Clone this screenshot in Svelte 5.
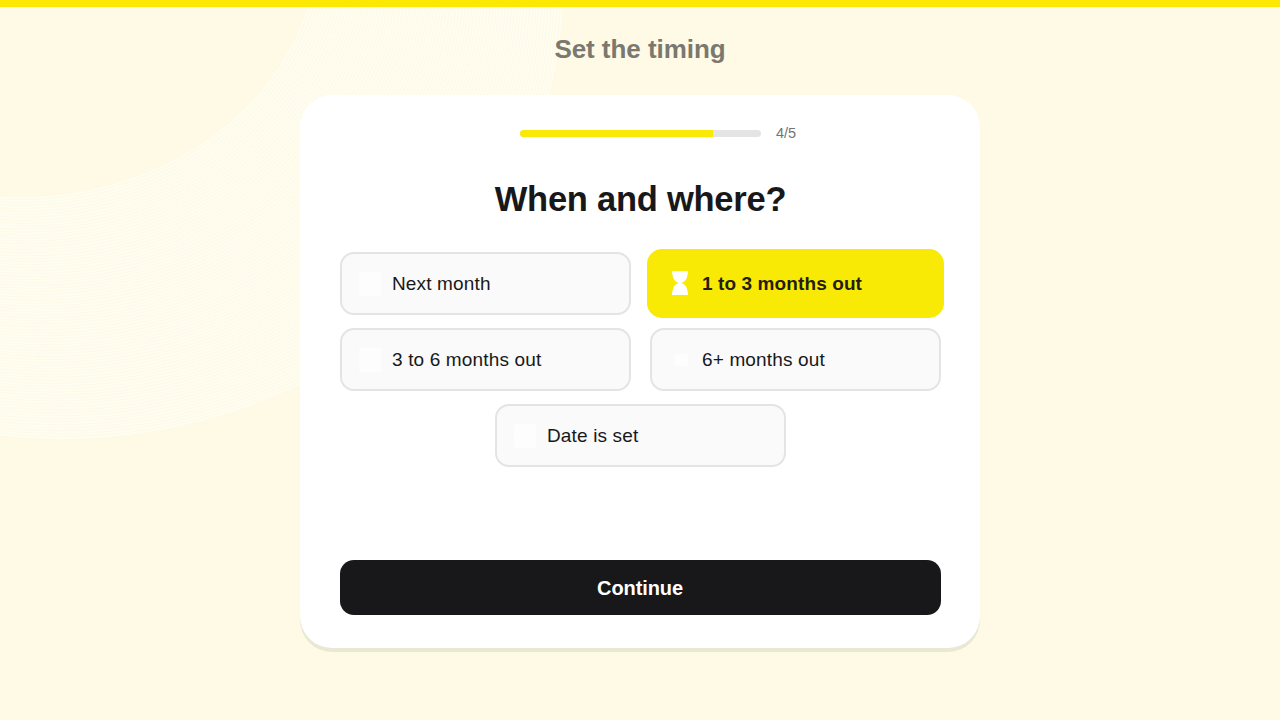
<script>
  const options = [
    { label: 'Next month', icon: 'square' },
    { label: '1 to 3 months out', icon: 'hourglass', selected: true },
    { label: '3 to 6 months out', icon: 'square' },
    { label: '6+ months out', icon: 'small' },
    { label: 'Date is set', icon: 'square' }
  ];
  const rings = Array.from({ length: 82 }, (_, i) => {
    const t = i / 81;
    return { cx: 20 + 40 * t, cy: -60 + 50 * t, rx: 299 + 203 * t, ry: 258 + 190 * t };
  });
</script>

<main>
  <svg class="pattern" width="640" height="480" viewBox="0 0 640 480" aria-hidden="true">
    {#each rings as ring}
      <ellipse cx={ring.cx} cy={ring.cy} rx={ring.rx} ry={ring.ry} />
    {/each}
  </svg>
  <header>Set the timing</header>
  <section class="card">
    <div class="progress">
      <div class="track"><div class="fill"></div></div>
      <span>4/5</span>
    </div>
    <h1>When and where?</h1>
    <div class="options">
      {#each options as option}
        <button class="option" class:selected={option.selected}>
          <svg class="icon" class:faint={!option.selected} width="24" height="26" viewBox="0 0 24 26" aria-hidden="true">
            {#if option.icon === 'hourglass'}
              <path d="M4 0H20V3H19.5C19.5 7.5 17.5 10.2 13.5 12C17.5 13.8 19.5 16.5 19.5 21H20V24H4V21H4.5C4.5 16.5 6.5 13.8 10.5 12C6.5 10.2 4.5 7.5 4.5 3H4Z" />
            {:else if option.icon === 'small'}
              <rect x="6" y="7" width="14" height="12" rx="2" />
            {:else}
              <rect x="1" y="1" width="22" height="24" rx="2" />
            {/if}
          </svg>
          <span>{option.label}</span>
        </button>
      {/each}
    </div>
    <button class="continue">Continue</button>
  </section>
</main>

<style>
  :global(body) { margin: 0; }
  main {
    box-sizing: border-box;
    position: relative;
    display: flex;
    flex-direction: column;
    align-items: center;
    width: 1280px;
    height: 720px;
    overflow: hidden;
    border-top: 7px solid #fbe903;
    background: #fffae6;
    color: #18181a;
    font-family: "Liberation Sans", Arial, sans-serif;
  }
  .pattern { position: absolute; left: 0; top: -7px; z-index: 0; }
  .pattern ellipse { fill: none; stroke: #fdfef4; stroke-width: 2; opacity: .75; }
  header {
    position: relative;
    height: 88px;
    line-height: 85px;
    color: #7a786f;
    font-size: 26px;
    font-weight: 700;
    letter-spacing: -0.05px;
  }
  .card {
    box-sizing: border-box;
    position: relative;
    display: flex;
    flex-direction: column;
    width: 680px;
    height: 553px;
    padding: 28px 39px 33px 40px;
    border-radius: 32px;
    background: #fff;
    box-shadow: 0 4px 0 #e9e8d3;
  }
  .progress {
    display: flex;
    align-items: center;
    gap: 15px;
    height: 20px;
    padding-left: 180px;
    font-size: 14.5px;
    color: #747474;
  }
  .track {
    width: 241px;
    height: 7px;
    border-radius: 4px;
    overflow: hidden;
    background: #e4e4e4;
  }
  .fill { width: 80%; height: 100%; background: #f9e906; }
  h1 {
    margin: 36px 0 32px;
    font-size: 34.5px;
    line-height: 41px;
    letter-spacing: -0.25px;
    text-align: center;
  }
  .options {
    display: flex;
    flex-wrap: wrap;
    justify-content: center;
    gap: 13px 19px;
  }
  button { font-family: inherit; color: inherit; }
  .option {
    box-sizing: border-box;
    display: flex;
    align-items: center;
    gap: 10px;
    width: 291px;
    height: 63px;
    padding: 0 16px;
    border: 2px solid #e4e4e4;
    border-radius: 14px;
    background: #fafafa;
    font-size: 19px;
    letter-spacing: 0.15px;
    text-align: left;
  }
  .icon { flex: none; fill: #fff; }
  .faint { opacity: .7; }
  .selected {
    width: 297px;
    height: 69px;
    margin: -3px;
    padding: 0 21px;
    border: 0;
    border-radius: 15px;
    background: #f8ea04;
    color: #241d10;
    letter-spacing: 0.1px;
    font-weight: 700;
  }
  .continue {
    height: 55px;
    margin-top: auto;
    padding: 2px 1px 0 0;
    border: 0;
    border-radius: 14px;
    background: #18181a;
    color: #fff;
    font-size: 20px;
    font-weight: 700;
    letter-spacing: -0.1px;
  }
</style>
